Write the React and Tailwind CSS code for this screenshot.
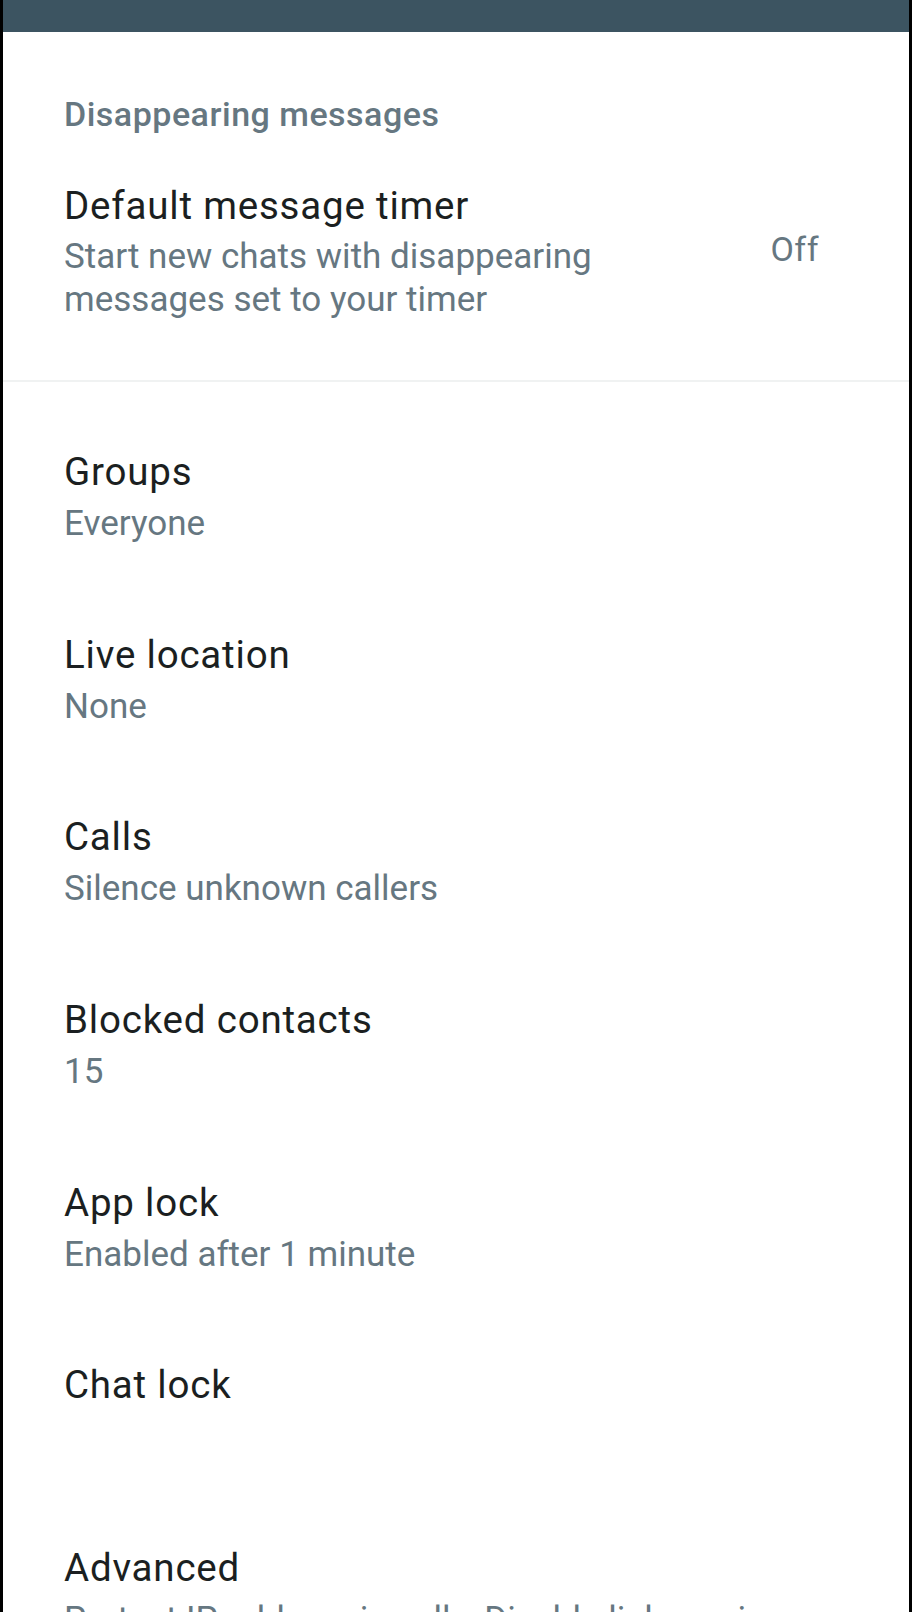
export default function App() {
  const items = [
    { title: "Groups", sub: "Everyone" },
    { title: "Live location", sub: "None" },
    { title: "Calls", sub: "Silence unknown callers" },
    { title: "Blocked contacts", sub: "15" },
    { title: "App lock", sub: "Enabled after 1 minute" },
    { title: "Chat lock", sub: null },
    { title: "Advanced", sub: "Protect IP address in calls, Disable link previews" },
  ];
  return (
    <div
      className="h-[1612px] w-[912px] overflow-hidden bg-black px-[3px]"
      style={{ fontFamily: "Roboto, 'Noto Sans', sans-serif" }}
    >
      <div className="flex h-full flex-col bg-white">
        <div className="h-[32px] shrink-0 bg-[#3c5461]" />
        <div className="mt-[62px] pl-[61px] text-[34px] font-medium leading-[40px] tracking-[0.5px] text-[#667781]">
          Disappearing messages
        </div>
        <div className="mt-[50px] flex items-start pl-[61px] pr-[90px]">
          <div className="w-[600px]">
            <div className="text-[38.5px] leading-[44px] tracking-[0.8px] text-[#1b1f21]">Default message timer</div>
            <div className="mt-[7px] text-[35px] leading-[43px] text-[#667781]">
              Start new chats with disappearing messages set to your timer
            </div>
          </div>
          <div className="ml-auto mt-[45px] text-[34px] leading-[40px] tracking-[0.5px] text-[#667781]">Off</div>
        </div>
        <div className="mt-[59px] h-[2px] shrink-0 bg-[#f0f2f2]" />
        <div className="pt-[28px]">
          {items.map((it) => (
            <div key={it.title} className="h-[182.7px] pl-[61px] pt-[40px]">
              <div className="text-[38.5px] leading-[44px] tracking-[0.8px] text-[#1b1f21]">{it.title}</div>
              {it.sub && (
                <div className="mt-[8px] whitespace-nowrap text-[35px] leading-[43px] text-[#667781]">
                  {it.sub}
                </div>
              )}
            </div>
          ))}
        </div>
      </div>
    </div>
  );
}
